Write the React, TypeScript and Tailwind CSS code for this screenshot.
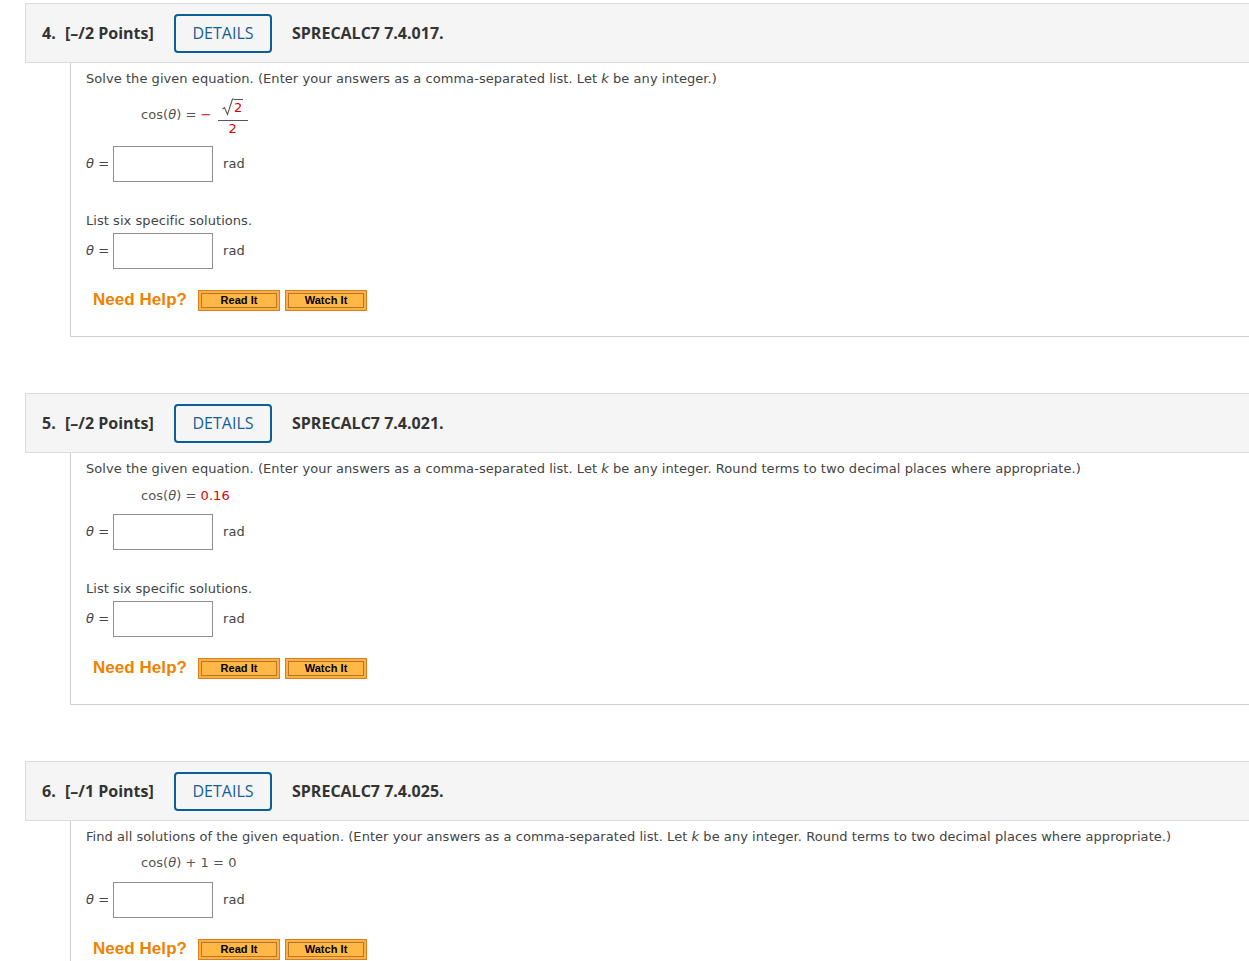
import React from "react";

const body = "font-['Verdana','DejaVu_Sans',sans-serif]";

function Header({ num, points, code }: { num: string; points: string; code: string }) {
  return (
    <div className="ml-[25px] flex h-[60px] items-center border-y border-l border-[#dcdcdc] bg-[#f5f5f5] pl-[16px] font-['Open_Sans',sans-serif] text-[16px] text-[#333]">
      <span className="w-[23px] font-bold">{num}</span>
      <span className="w-[109px] font-bold">{points}</span>
      <span className="flex h-[39px] w-[98px] items-center justify-center rounded-[4px] border-2 border-[#0b5f96] text-[#155f93]">
        DETAILS
      </span>
      <span className="ml-[20px] font-bold">{code}</span>
    </div>
  );
}

function Theta() {
  return <span className="italic">θ</span>;
}

function AnswerRow({ className = "" }: { className?: string }) {
  return (
    <div className={`flex items-center ${className}`}>
      <span className="w-[27px] whitespace-pre">
        <Theta /> =
      </span>
      <span className="h-[36px] w-[100px] border border-[#8f8f8f] bg-white" />
      <span className="ml-[10px]">rad</span>
    </div>
  );
}

function HelpButton({ label }: { label: string }) {
  return (
    <span className="flex h-[21px] w-[82px] items-center border border-[#d7801f] bg-[#fcb043] p-[2px]">
      <span className="flex h-full w-full items-center justify-center border border-[#b8752b] bg-[#ffb845] font-['Arial','Liberation_Sans',sans-serif] text-[11px] font-bold leading-none text-black">
        {label}
      </span>
    </span>
  );
}

function NeedHelp() {
  return (
    <div className="ml-[7px] mt-[20px] flex h-[22px] items-center">
      <span className="font-['Arial','Liberation_Sans',sans-serif] text-[17px] font-bold text-[#ef8200]">
        Need Help?
      </span>
      <span className="ml-[11px] flex gap-[5px]">
        <HelpButton label="Read It" />
        <HelpButton label="Watch It" />
      </span>
    </div>
  );
}

function Content({ children, last = false }: { children: React.ReactNode; last?: boolean }) {
  return (
    <div
      className={`ml-[70px] border-l border-[#cfcfcf] pl-[15px] pt-[8px] ${body} text-[13px] leading-[16px] tracking-[0.05px] text-[#444] ${
        last ? "pb-[25px]" : "border-b pb-[25px]"
      }`}
    >
      {children}
    </div>
  );
}

export default function App() {
  return (
    <div className="w-full overflow-hidden bg-white pt-[3px]">
      {/* question 4 */}
      <Header num="4." points="[–/2 Points]" code="SPRECALC7 7.4.017." />
      <Content>
        <p>
          Solve the given equation. (Enter your answers as a comma-separated list. Let <i>k</i> be any integer.)
        </p>
        <div className="ml-[55px] mt-[9px] flex items-start text-[#555]">
          <span className="mt-[11px] whitespace-pre">
            cos(<Theta />) = <span className="text-[#e00000]">−</span>
          </span>
          <span className="ml-[6px] flex w-[30px] flex-col items-center">
            <span className="flex h-[20px] items-end pb-[1px]">
              <svg width="12" height="18" viewBox="0 0 12 18" className="mb-[-1px]">
                <path d="M0.5 11 L2.5 9.5 L5.5 16.5 L10.5 1 L12 1" fill="none" stroke="#555" strokeWidth="1.1" />
              </svg>
              <span className="border-t border-[#555] pr-[1px] leading-[15px] text-[#e00000]">2</span>
            </span>
            <span className="mt-[4px] h-px w-full bg-[#555]" />
            <span className="text-[#e00000]">2</span>
          </span>
        </div>
        <AnswerRow className="mt-[9px]" />
        <p className="mt-[31px]">List six specific solutions.</p>
        <AnswerRow className="mt-[4px]" />
        <NeedHelp />
      </Content>

      {/* question 5 */}
      <div className="mt-[56px]">
        <Header num="5." points="[–/2 Points]" code="SPRECALC7 7.4.021." />
      </div>
      <Content>
        <p>
          Solve the given equation. (Enter your answers as a comma-separated list. Let <i>k</i> be any integer. Round
          terms to two decimal places where appropriate.)
        </p>
        <p className="ml-[55px] mt-[11px] whitespace-pre text-[#555]">
          cos(<Theta />) = <span className="text-[#e00000]">0.16</span>
        </p>
        <AnswerRow className="mt-[10px]" />
        <p className="mt-[31px]">List six specific solutions.</p>
        <AnswerRow className="mt-[4px]" />
        <NeedHelp />
      </Content>

      {/* question 6 */}
      <div className="mt-[56px]">
        <Header num="6." points="[–/1 Points]" code="SPRECALC7 7.4.025." />
      </div>
      <Content last>
        <p>
          Find all solutions of the given equation. (Enter your answers as a comma-separated list. Let <i>k</i> be any
          integer. Round terms to two decimal places where appropriate.)
        </p>
        <p className="ml-[55px] mt-[10px] whitespace-pre text-[#555]">
          cos(<Theta />) + 1 = 0
        </p>
        <AnswerRow className="mt-[11px]" />
        <NeedHelp />
      </Content>
    </div>
  );
}
